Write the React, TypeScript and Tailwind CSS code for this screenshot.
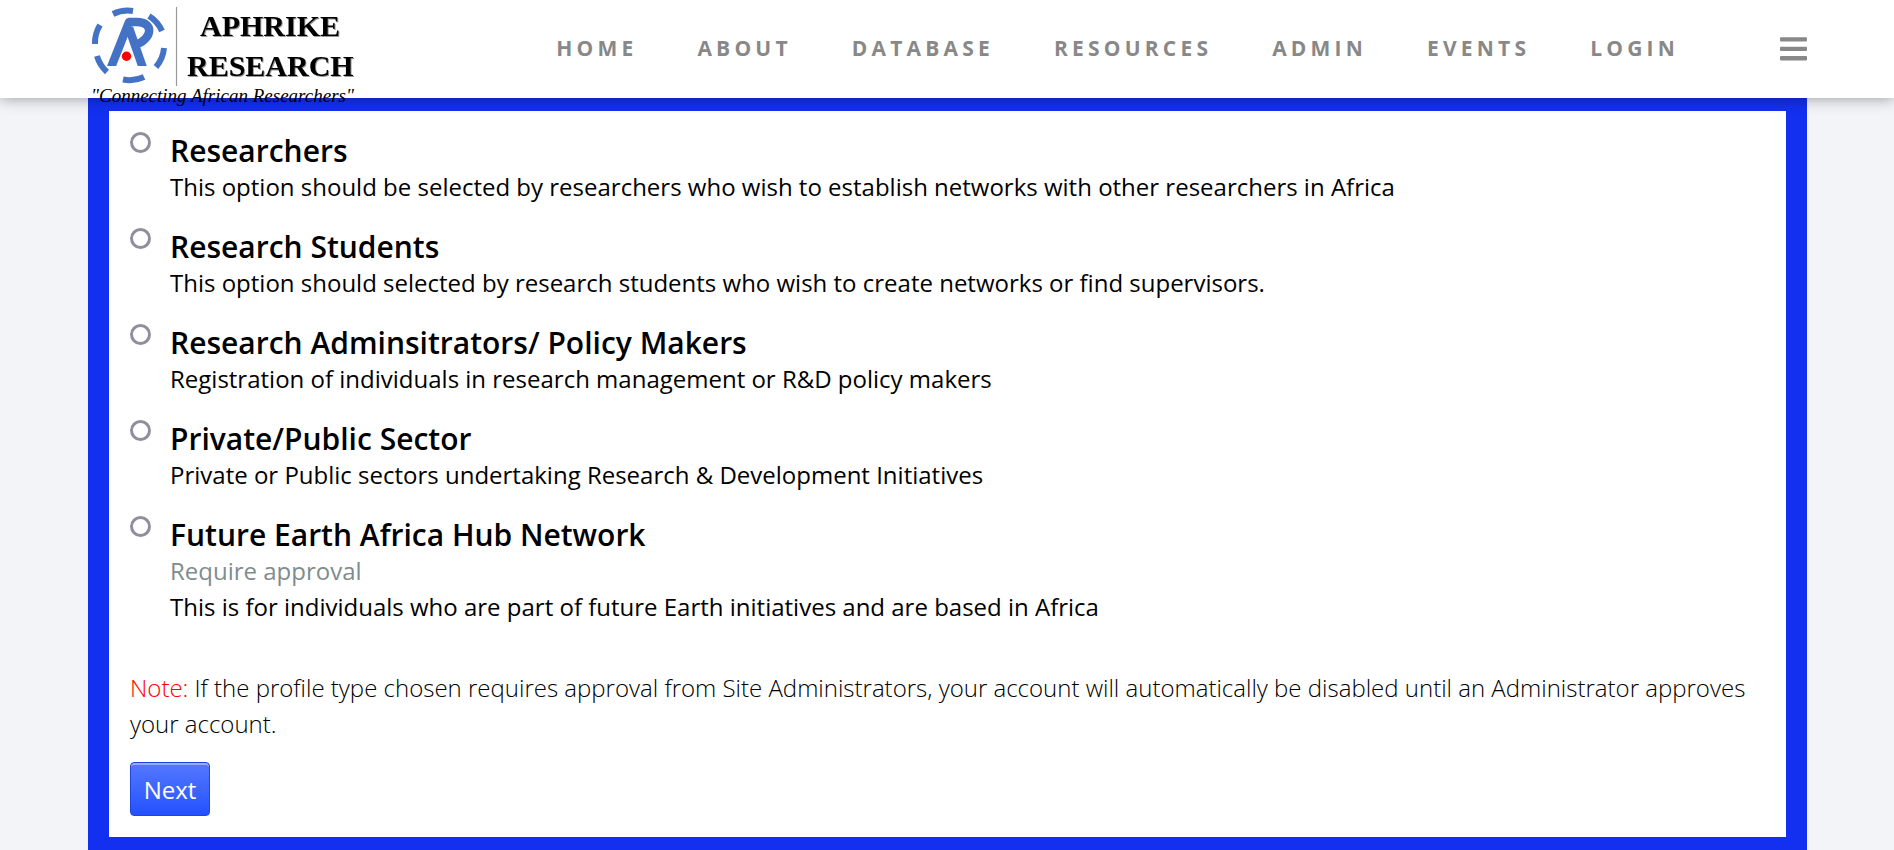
import React from 'react';

const navItems = ['Home', 'About', 'Database', 'Resources', 'Admin', 'Events', 'Login'];

interface ProfileType {
  id: string;
  title: string;
  description: string;
  requiresApproval?: boolean;
}

const profileTypes: ProfileType[] = [
  {
    id: 'researchers',
    title: 'Researchers',
    description:
      'This option should be selected by researchers who wish to establish networks with other researchers in Africa',
  },
  {
    id: 'students',
    title: 'Research Students',
    description:
      'This option should selected by research students who wish to create networks or find supervisors.',
  },
  {
    id: 'policy',
    title: 'Research Adminsitrators/ Policy Makers',
    description: 'Registration of individuals in research management or R&D policy makers',
  },
  {
    id: 'sector',
    title: 'Private/Public Sector',
    description: 'Private or Public sectors undertaking Research & Development Initiatives',
  },
  {
    id: 'hub',
    title: 'Future Earth Africa Hub Network',
    description: 'This is for individuals who are part of future Earth initiatives and are based in Africa',
    requiresApproval: true,
  },
];

const Logo: React.FC = () => (
  <svg viewBox="0 0 270 112" className="w-[270px] h-[112px]" role="img" aria-label="Aphrike Research">
    {/* broken ring */}
    <g fill="none" stroke="#4472c4" strokeWidth="6">
      <path d="M25 14A34 34 0 0 1 45 11" />
      <path d="M61 16A34 34 0 0 1 74 31" />
      <path d="M76 48A34 34 0 0 1 68 67" />
      <path d="M56 77A34 34 0 0 1 35 79.500" />
      <path d="M19 72A34 34 0 0 1 9 56" />
      <path d="M7 44A34 34 0 0 1 12 25" />
    </g>
    {/* monogram */}
    <clipPath id="mark">
      <path d="M0 0H80V66H0Z" />
    </clipPath>
    <g fill="none" stroke="#4472c4" strokeWidth="8.500" clipPath="url(#mark)">
      <path d="M22 70L41 22H49C66 22 65 39 47 45" strokeLinejoin="round" />
      <path d="M41 28L56 71" />
    </g>
    <circle cx="38.500" cy="56.300" r="4.700" fill="#f00" />
    <path d="M88.500 7V86" stroke="#999" strokeWidth="1.200" />
    <g fontFamily="'Liberation Serif', serif" fontWeight="700" fontSize="30" className="drop-shadow-[1px_1px_0_#999]">
      <text x="112" y="36">APHRIKE</text>
      <text x="99" y="76">RESEARCH</text>
    </g>
    <text x="3" y="102" fontFamily="'Liberation Serif', serif" fontStyle="italic" fontSize="19">
      "Connecting African Researchers"
    </text>
  </svg>
);

const Header: React.FC = () => (
  <header className="relative z-10 h-[98px] bg-white shadow-[0_0_14px_rgba(0,0,0,0.4)]">
    <div className="ml-[88px] mr-[87px] flex h-full items-center justify-between">
      <a href="#home" className="h-[98px] shrink-0">
        <Logo />
      </a>
      <div className="flex items-center gap-[101px]">
        <nav className="flex gap-[60px] pb-0.5">
          {navItems.map((item) => (
            <a
              key={item}
              href={`#${item.toLowerCase()}`}
              className="text-[21px] font-bold uppercase leading-8 tracking-[0.2em] text-[#888]"
            >
              {item}
            </a>
          ))}
        </nav>
        <button type="button" aria-label="Open menu">
          <svg viewBox="0 0 27 24" className="h-6 w-[27px]" fill="#888">
            <rect y="0.300" width="27" height="4.300" rx="1" />
            <rect y="9.700" width="27" height="4.300" rx="1" />
            <rect y="19.100" width="27" height="4.300" rx="1" />
          </svg>
        </button>
      </div>
    </div>
  </header>
);

const ProfileOption: React.FC<{ profile: ProfileType }> = ({ profile }) => (
  <div className="flex items-start gap-[19px]">
    <input
      type="radio"
      name="profile-type"
      id={profile.id}
      className="mt-px size-[21px] shrink-0 appearance-none rounded-full border-3 border-[#8f8f9d] bg-white checked:border-[6px] checked:border-[#1330f0]"
    />
    <label htmlFor={profile.id} className="pt-[2px]">
      <span className="block text-[30px] font-semibold leading-[36px]">{profile.title}</span>
      {profile.requiresApproval && <span className="block text-[#7f8c8d]">Require approval</span>}
      <span className="block">{profile.description}</span>
    </label>
  </div>
);

const App: React.FC = () => {
  return (
    <div className="min-h-screen bg-[#f2f4f8] font-['Open_Sans',sans-serif] text-black">
      <Header />
      <main className="ml-[88px] mr-[87px] bg-[#1330f0] px-[21px] py-[13px]">
        <form className="bg-white px-[21px] pb-[21px] pt-5 text-2xl leading-9">
          <div className="flex flex-col gap-[22px]">
            {profileTypes.map((profile) => (
              <ProfileOption key={profile.id} profile={profile} />
            ))}
          </div>
          <p className="mt-[45px] font-light">
            <span className="text-[#f00]">Note:</span> If the profile type chosen requires approval from Site
            Administrators, your account will automatically be disabled until an Administrator approves your account.
          </p>
          <button
            type="button"
            className="mt-5 block h-[54px] w-20 rounded-[4px] border border-[#1f45e0] bg-linear-to-b from-[#5577ff] to-[#2350ff] pt-0.5 text-white shadow-[inset_0_2px_0_rgba(255,255,255,0.4)]"
          >
            Next
          </button>
        </form>
      </main>
    </div>
  );
};

export default App;
